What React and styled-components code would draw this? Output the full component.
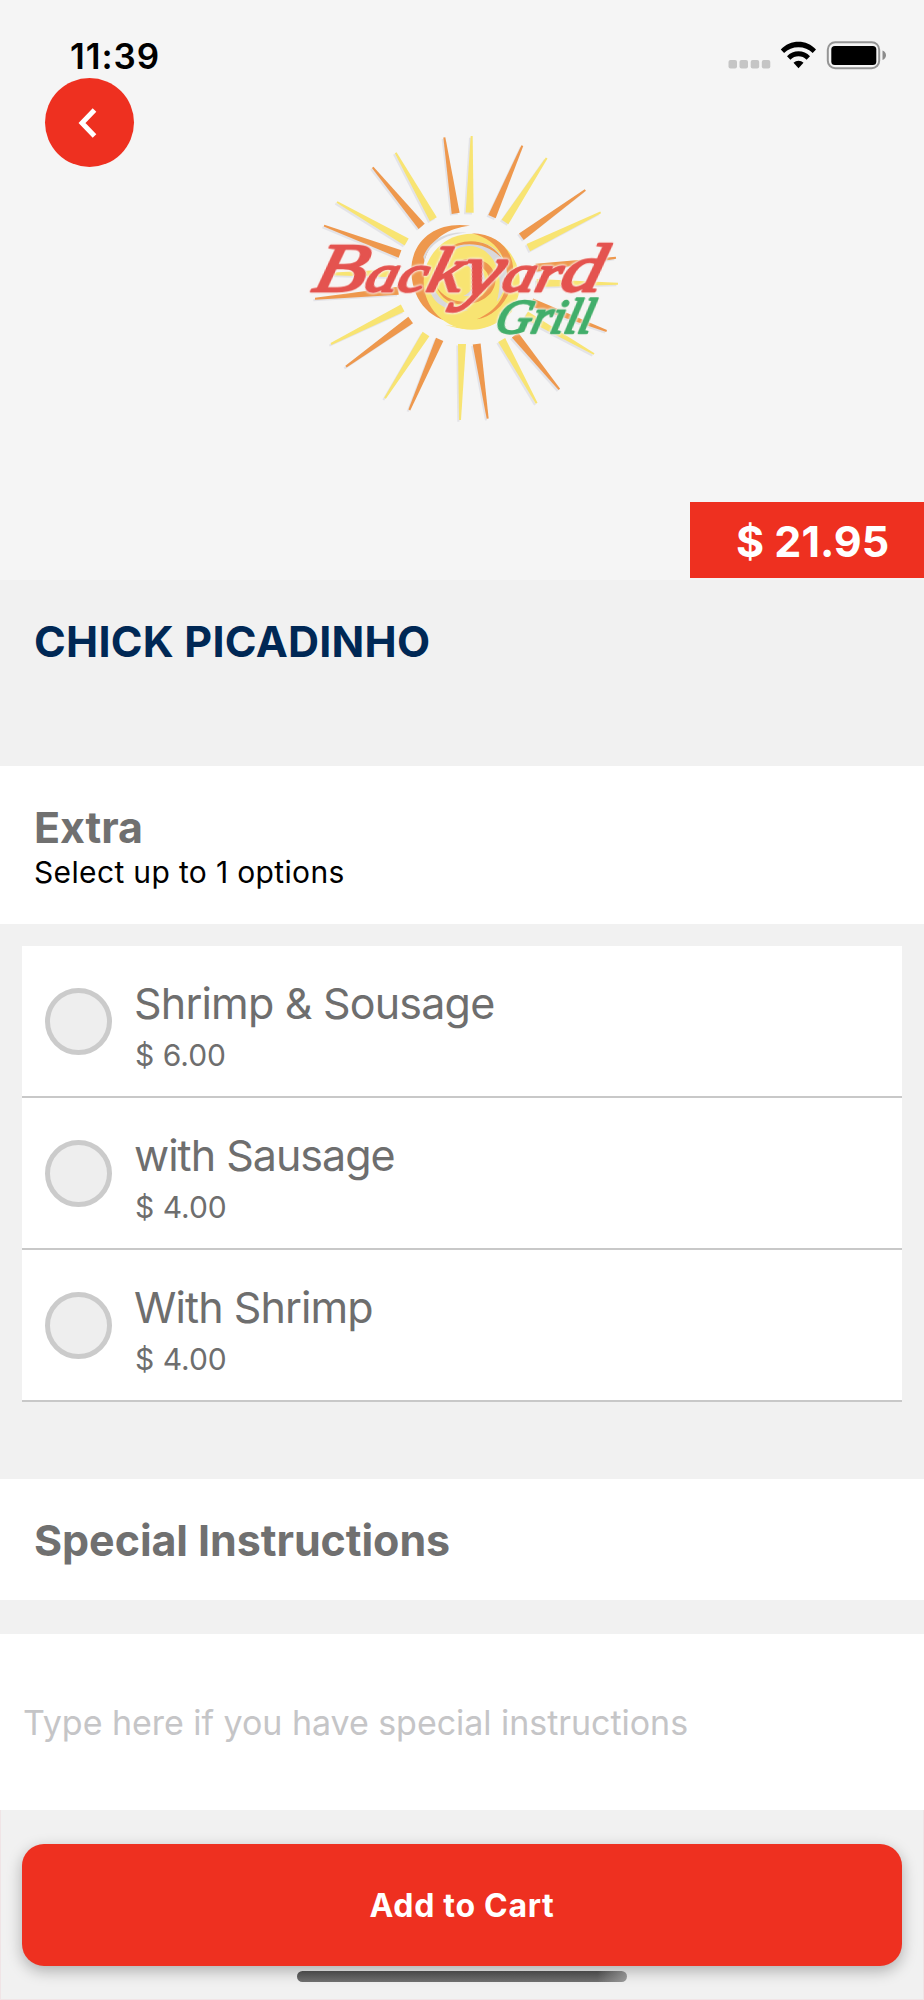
import styled, { createGlobalStyle } from 'styled-components'

const GlobalStyle = createGlobalStyle`
  * {
    box-sizing: border-box;
  }
  body {
    margin: 0;
    font-family: Inter, 'Liberation Sans', sans-serif;
    background-color: #f1f1f1;
  }
`

const Screen = styled.main`
  display: flex;
  flex-direction: column;
  width: 924px;
  height: 2000px;
  overflow: hidden;
  background-color: #f1f1f1;
`

const Header = styled.header`
  display: flex;
  flex-direction: column;
  height: 580px;
  padding-bottom: 2px;
  background-color: #f5f5f5;
`

const StatusBar = styled.div`
  display: flex;
  justify-content: space-between;
  height: 78px;
  padding: 33px 38px 0 70px;
`

const Time = styled.span`
  font-size: 35px;
  font-weight: 600;
  line-height: 46px;
  letter-spacing: 0.9px;
`

const StatusIcons = styled.svg`
  width: 160px;
  height: 40px;
`

const HeaderBody = styled.div`
  display: flex;
  align-items: flex-start;
  padding-left: 45px;
`

const BackButton = styled.button`
  display: flex;
  align-items: center;
  justify-content: center;
  width: 89px;
  height: 89px;
  padding: 0 5px 0 0;
  border: none;
  border-radius: 50%;
  background-color: #ee3020;
`

const Logo = styled.svg`
  width: 340px;
  height: 320px;
  margin: 42px 0 0 156px;
`

const LogoText = styled.g`
  font-family: 'Liberation Serif', serif;
  font-style: italic;
  stroke-width: 7px;
  stroke-linejoin: round;
  filter: drop-shadow(0 0 3px #f8f3ef) drop-shadow(0 0 3px #f8f3ef);
`

const PriceTag = styled.div`
  align-self: flex-end;
  width: 234px;
  height: 76px;
  margin-top: auto;
  padding: 2px 0 0 46px;
  font-size: 43px;
  font-weight: 700;
  line-height: 74px;
  white-space: nowrap;
  color: #fff;
  background-color: #ee3020;
`

const TitleBlock = styled.div`
  height: 186px;
  padding: 35px 34px 0;
`

const Title = styled.h1`
  margin: 0;
  font-size: 43px;
  font-weight: 700;
  line-height: 52px;
  letter-spacing: 0.24px;
  color: #002855;
`

const Section = styled.section`
  height: ${({ $height }) => $height}px;
  padding: 35px 34px 0;
  background-color: #fff;
`

const SectionTitle = styled.h2`
  margin: 0;
  font-size: 43px;
  font-weight: 700;
  line-height: 52px;
  letter-spacing: -0.07px;
  color: #707070;
`

const Hint = styled.p`
  margin: 0;
  font-size: 30px;
  line-height: 38px;
  letter-spacing: 0.35px;
  color: #000;
`

const OptionList = styled.ul`
  margin: 22px 22px 77px;
  padding: 0;
  list-style: none;
`

const Option = styled.li`
  display: flex;
  align-items: center;
  gap: 22px;
  height: 152px;
  padding-left: 23px;
  border-bottom: 2px solid #c8c8c8;
  background-color: #fff;
`

const Radio = styled.span`
  width: 67px;
  height: 67px;
  border: 5px solid #cbcbcb;
  border-radius: 50%;
  background-color: #eee;
`

const OptionText = styled.div`
  display: flex;
  flex-direction: column;
  gap: 8px;
  padding-top: 7px;
  color: #6e6e6e;
`

const OptionName = styled.span`
  font-size: 43px;
  line-height: 52px;
  letter-spacing: ${({ $tracking }) => $tracking}px;
`

const OptionPrice = styled.span`
  padding-left: 1px;
  font-size: 30px;
  line-height: 36px;
`

const Instructions = styled.div`
  display: flex;
  align-items: center;
  height: 176px;
  margin-top: 34px;
  padding: 0 23px;
  font-size: 34px;
  letter-spacing: -0.04px;
  color: #c5c5c7;
  background-color: #fff;
`

const Footer = styled.footer`
  display: flex;
  flex: 1;
  flex-direction: column;
  align-items: center;
  padding-top: 34px;
  border: solid #f0e4e6;
  border-width: 0 1px 1px;
`

const CartButton = styled.button`
  width: 880px;
  height: 122px;
  flex-shrink: 0;
  padding: 0;
  border: none;
  border-radius: 22px;
  font-family: inherit;
  font-size: 32px;
  font-weight: 700;
  line-height: 123px;
  letter-spacing: 0.7px;
  color: #fff;
  background-color: #ee3020;
  box-shadow: 0 5px 15px rgba(0, 0, 0, 0.28);
`

const HomeIndicator = styled.div`
  width: 330px;
  height: 11px;
  flex-shrink: 0;
  margin-top: 5px;
  border-radius: 6px;
  background: linear-gradient(90deg, transparent 91%, rgba(190, 190, 190, 0.55)), linear-gradient(#484848, #6f6f6f);
  z-index: 1;
`

const options = [
  { name: 'Shrimp & Sousage', price: '$ 6.00', tracking: -0.8 },
  { name: 'with Sausage', price: '$ 4.00', tracking: -1 },
  { name: 'With Shrimp', price: '$ 4.00', tracking: -0.9 },
]

// [tip x, tip y, base x, base y]
const orangeRays = [
  [463, 52, 497, 280],
  [697, 77, 606, 290],
  [886, 210, 694, 350],
  [978, 413, 738, 443],
  [950, 633, 725, 547],
  [808, 808, 675, 645],
  [593, 896, 560, 672],
  [358, 870, 449, 658],
  [168, 740, 362, 600],
  [75, 536, 325, 512],
  [102, 317, 330, 402],
  [248, 142, 395, 319],
]

const yellowRays = [
  [545, 48, 539, 278],
  [770, 114, 645, 306],
  [932, 277, 715, 383],
  [984, 491, 740, 489],
  [912, 702, 708, 585],
  [740, 850, 635, 660],
  [510, 900, 516, 672],
  [285, 835, 408, 642],
  [123, 672, 338, 564],
  [102, 462, 315, 460],
  [141, 246, 350, 366],
  [317, 98, 430, 298],
]

const rayPoints = ([tx, ty, bx, by]) => {
  const length = Math.hypot(bx - tx, by - ty)
  const nx = (ty - by) / length
  const ny = (bx - tx) / length
  return [
    [tx + nx * 3, ty + ny * 3],
    [bx + nx * 12, by + ny * 12],
    [bx - nx * 12, by - ny * 12],
    [tx - nx * 3, ty - ny * 3],
  ].join(' ')
}

const Rays = ({ rays, color }) => (
  <g fill={color}>
    {rays.map((ray) => (
      <polygon key={ray.join()} points={rayPoints(ray)} />
    ))}
  </g>
)

const BackyardLogo = () => (
  <Logo viewBox='0 0 1020 960'>
    <g transform='translate(-5 5)' opacity='0.6'>
      <Rays rays={yellowRays} color='#d8d8e0' />
      <Rays rays={orangeRays} color='#d8d8e0' />
    </g>
    <Rays rays={yellowRays} color='#f8e472' />
    <Rays rays={orangeRays} color='#ee984d' />
    <path d='M540 317C440 302 360 360 364 460C370 550 425 605 510 610L580 600L430 500L400 440C410 370 460 325 540 317Z' fill='#ee984d' />
    <path d='M400 410C425 350 480 333 530 338C440 342 400 400 405 430Z' fill='#d9d9dc' />
    <circle cx='545' cy='485' r='144' fill='#f8e472' />
    <path d='M465 614C540 640 620 625 665 575L690 500C680 590 610 645 465 614Z' fill='#f8e472' />
    <path d='M545 340C630 342 680 400 668 475C660 545 610 590 560 598C625 570 654 520 650 460C646 400 610 355 545 340Z' fill='#ee984d' />
    <path d='M465 410C510 355 590 350 633 405C665 455 650 510 620 545C640 475 625 425 585 393C545 365 500 378 465 410Z' fill='#d8d8dc' />
    <path d='M470 388C520 350 600 355 635 414C590 368 530 362 470 388Z' fill='#ee984d' />
    <path d='M415 490C420 545 465 580 535 571C475 563 438 535 425 485Z' fill='#d8d8dc' />
    <path d='M440 500C460 565 555 570 602 520C640 470 600 410 535 416C505 418 490 435 480 455C510 422 570 422 592 460C610 505 575 545 520 545C485 544 455 525 440 500Z' fill='#ee984d' />
    <path d='M520 430C565 422 598 465 580 500C570 525 545 530 520 528C560 512 570 452 520 430Z' fill='#d8d8dc' />
    <LogoText>
      <text fontSize='160' fill='#e4534f' stroke='#e4534f' textLength='868' lengthAdjust='spacingAndGlyphs' transform='translate(62 513) skewX(-14)'>
        <tspan fontSize='210'>B</tspan>ac<tspan fontSize='192'>k</tspan><tspan fontSize='225' dy='14'>y</tspan><tspan dy='-14'>ar</tspan><tspan fontSize='205'>d</tspan>
      </text>
      <text fontSize='145' fill='#42ae6b' stroke='#42ae6b' textLength='290' lengthAdjust='spacingAndGlyphs' transform='translate(610 639) skewX(-14)'>
        Grill
      </text>
    </LogoText>
  </Logo>
)

const App = () => {
  return (
    <>
      <GlobalStyle />
      <Screen>
        <Header>
          <StatusBar>
            <Time>11:39</Time>
            <StatusIcons viewBox='0 0 160 40'>
              {/* signal */}
              <g fill='#c5c5c5'>
                <rect x='2.5' y='27' width='8.5' height='8.5' rx='2' />
                <rect x='13.5' y='27' width='8.5' height='8.5' rx='2' />
                <rect x='24.7' y='27' width='8.5' height='8.5' rx='2' />
                <rect x='35.8' y='27' width='8.5' height='8.5' rx='2' />
              </g>
              {/* wifi */}
              <path d='M54.8 16.6C64 6.2 81 6.2 90 16.6L86.7 20C79.5 12.2 65.4 12.2 58.1 20Z' />
              <path d='M61 23.2C67 16.6 78 16.6 84 23.2L80.6 26.7C76.2 22.2 68.8 22.2 64.4 26.7Z' />
              <path d='M67.5 29.8C70.3 27 74.8 27 77.5 29.8L72.5 35.2Z' />
              {/* battery */}
              <rect x='101.8' y='9.2' width='51.4' height='26' rx='7.5' fill='none' stroke='#959595' strokeWidth='2' />
              <rect x='105.3' y='13' width='45' height='19' rx='3.5' />
              <path d='M156.5 17.5Q160 19 160 22.2T156.5 27Z' fill='#8c8c8c' />
            </StatusIcons>
          </StatusBar>
          <HeaderBody>
            <BackButton aria-label='Back'>
              <svg width='22' height='34' viewBox='0 0 22 34' fill='none' stroke='#fff' strokeWidth='5'>
                <path d='M18.5 4L6 17L18.5 30' />
              </svg>
            </BackButton>
            <BackyardLogo />
          </HeaderBody>
          <PriceTag>$ 21.95</PriceTag>
        </Header>
        <TitleBlock>
          <Title>CHICK PICADINHO</Title>
        </TitleBlock>
        <Section $height={158}>
          <SectionTitle>Extra</SectionTitle>
          <Hint>Select up to 1 options</Hint>
        </Section>
        <OptionList>
          {options.map(({ name, price, tracking }) => (
            <Option key={name}>
              <Radio />
              <OptionText>
                <OptionName $tracking={tracking}>{name}</OptionName>
                <OptionPrice>{price}</OptionPrice>
              </OptionText>
            </Option>
          ))}
        </OptionList>
        <Section $height={121}>
          <SectionTitle>Special Instructions</SectionTitle>
        </Section>
        <Instructions>Type here if you have special instructions</Instructions>
        <Footer>
          <CartButton>Add to Cart</CartButton>
          <HomeIndicator />
        </Footer>
      </Screen>
    </>
  )
}

export default App
